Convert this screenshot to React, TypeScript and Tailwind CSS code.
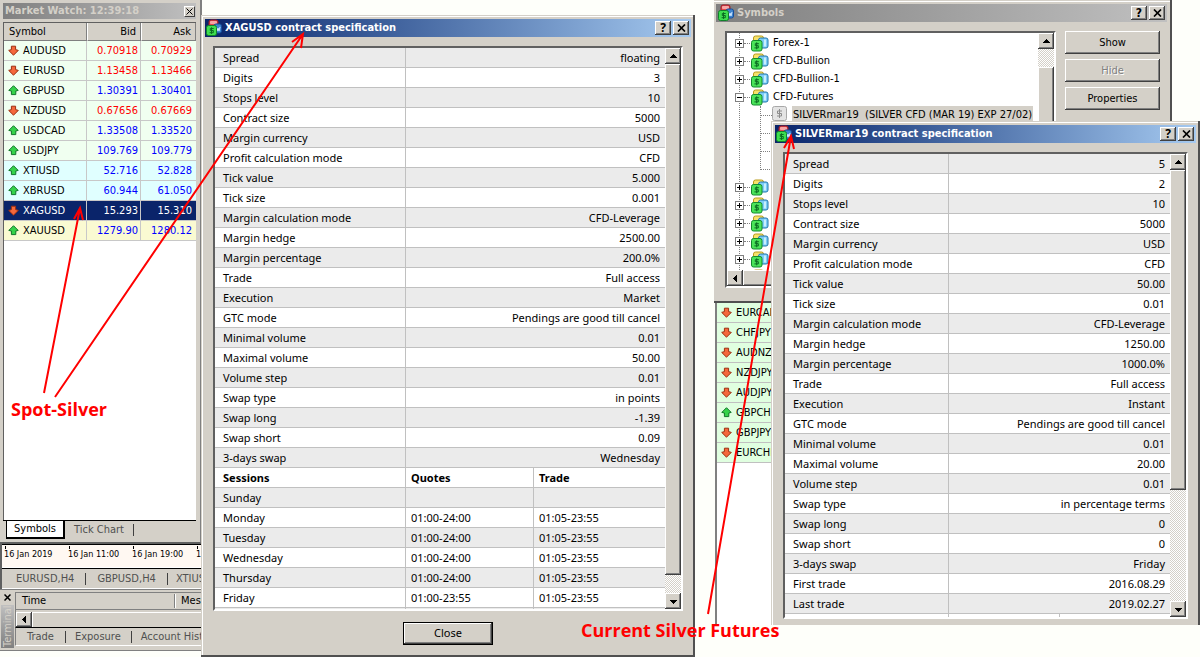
import { ReactNode } from "react";

type Row = [string, string];

type Quote = {
  symbol: string;
  bid: string;
  ask: string;
  up: boolean;
  color: string;
};

const quotes: Quote[] = [
  { symbol: "AUDUSD", bid: "0.70918", ask: "0.70929", up: false, color: "bg-[#f0fff0] text-[#ff0000]" },
  { symbol: "EURUSD", bid: "1.13458", ask: "1.13466", up: false, color: "bg-[#f0fff0] text-[#ff0000]" },
  { symbol: "GBPUSD", bid: "1.30391", ask: "1.30401", up: true, color: "bg-[#f0fff0] text-[#0000ff]" },
  { symbol: "NZDUSD", bid: "0.67656", ask: "0.67669", up: false, color: "bg-[#f0fff0] text-[#ff0000]" },
  { symbol: "USDCAD", bid: "1.33508", ask: "1.33520", up: true, color: "bg-[#f0fff0] text-[#0000ff]" },
  { symbol: "USDJPY", bid: "109.769", ask: "109.779", up: true, color: "bg-[#f0fff0] text-[#0000ff]" },
  { symbol: "XTIUSD", bid: "52.716", ask: "52.828", up: true, color: "bg-[#e0ffff] text-[#0000ff]" },
  { symbol: "XBRUSD", bid: "60.944", ask: "61.050", up: true, color: "bg-[#e0ffff] text-[#0000ff]" },
  { symbol: "XAGUSD", bid: "15.293", ask: "15.310", up: false, color: "bg-[#0a246a] text-white" },
  { symbol: "XAUUSD", bid: "1279.90", ask: "1280.12", up: true, color: "bg-[#fafad2] text-[#0000ff]" },
];

const crosses = [
  { symbol: "EURCAD", up: false },
  { symbol: "CHFJPY", up: false },
  { symbol: "AUDNZD", up: false },
  { symbol: "NZDJPY", up: false },
  { symbol: "AUDJPY", up: false },
  { symbol: "GBPCHF", up: true },
  { symbol: "GBPJPY", up: false },
  { symbol: "EURCHF", up: false },
];

const spotRows: Row[] = [
  ["Spread", "floating"],
  ["Digits", "3"],
  ["Stops level", "10"],
  ["Contract size", "5000"],
  ["Margin currency", "USD"],
  ["Profit calculation mode", "CFD"],
  ["Tick value", "5.000"],
  ["Tick size", "0.001"],
  ["Margin calculation mode", "CFD-Leverage"],
  ["Margin hedge", "2500.00"],
  ["Margin percentage", "200.0%"],
  ["Trade", "Full access"],
  ["Execution", "Market"],
  ["GTC mode", "Pendings are good till cancel"],
  ["Minimal volume", "0.01"],
  ["Maximal volume", "50.00"],
  ["Volume step", "0.01"],
  ["Swap type", "in points"],
  ["Swap long", "-1.39"],
  ["Swap short", "0.09"],
  ["3-days swap", "Wednesday"],
];

const sessions = [
  ["Sunday", "", ""],
  ["Monday", "01:00-24:00", "01:05-23:55"],
  ["Tuesday", "01:00-24:00", "01:05-23:55"],
  ["Wednesday", "01:00-24:00", "01:05-23:55"],
  ["Thursday", "01:00-24:00", "01:05-23:55"],
  ["Friday", "01:00-23:55", "01:05-23:55"],
  ["", "", ""],
];

const futuresRows: Row[] = [
  ["Spread", "5"],
  ["Digits", "2"],
  ["Stops level", "10"],
  ["Contract size", "5000"],
  ["Margin currency", "USD"],
  ["Profit calculation mode", "CFD"],
  ["Tick value", "50.00"],
  ["Tick size", "0.01"],
  ["Margin calculation mode", "CFD-Leverage"],
  ["Margin hedge", "1250.00"],
  ["Margin percentage", "1000.0%"],
  ["Trade", "Full access"],
  ["Execution", "Instant"],
  ["GTC mode", "Pendings are good till cancel"],
  ["Minimal volume", "0.01"],
  ["Maximal volume", "20.00"],
  ["Volume step", "0.01"],
  ["Swap type", "in percentage terms"],
  ["Swap long", "0"],
  ["Swap short", "0"],
  ["3-days swap", "Friday"],
  ["First trade", "2016.08.29"],
  ["Last trade", "2019.02.27"],
];

const raised =
  "bg-[#d4d0c8] shadow-[inset_-1px_-1px_#404040,inset_1px_1px_#fff,inset_-2px_-2px_#808080]";
const sunken =
  "border-2 border-t-[#606060] border-l-[#606060] border-r-white border-b-white bg-white";
const hatch =
  "bg-[repeating-conic-gradient(#fff_0_25%,#d4d0c8_0_50%)] bg-size-[2px_2px]";

function Arrow({ up }: { up: boolean }) {
  return (
    <svg width="11" height="11" viewBox="0 0 11 11" className="shrink-0">
      {up ? (
        <path d="M5.5 .7 10.2 5.4 7.8 6v3.6H3.4V6L.8 5.4Z" fill="#35d24a" stroke="#11752a" />
      ) : (
        <path d="M3.4 1.2h4.2v3.4l2.7.8-4.8 4.8L.7 5.4l2.7-.8Z" fill="#f4683c" stroke="#9c2f10" />
      )}
    </svg>
  );
}

function Triangle({ dir }: { dir: "up" | "down" | "left" }) {
  return (
    <svg width="7" height="7" viewBox="0 0 7 7" shapeRendering="crispEdges">
      {dir === "up" && <path d="M3 1h1v1h1v1h1v1h1v1H0V4h1V3h1V2h1Z" />}
      {dir === "down" && <path d="M3 6h1V5h1V4h1V3h1V2H0v1h1v1h1v1h1Z" />}
      {dir === "left" && <path d="M1 3v1h1v1h1v1h1v1h1V0H4v1H3v1H2v1Z" />}
    </svg>
  );
}

function WindowIcon() {
  return (
    <svg width="16" height="18" viewBox="0 0 16 18" className="shrink-0">
      <rect x="3" y="1" width="9" height="9" rx="2" fill="#e0474c" stroke="#9e1c28" />
      <rect x="4" y="2" width="7" height="3" rx="1" fill="#f7a5a5" />
      <rect x="8" y="5" width="7.5" height="9" rx="2" fill="#3f86cf" stroke="#174d9a" />
      <path d="M10 8l1 4 1-3 1 3 1-4" fill="none" stroke="#cfe6ff" />
      <rect x=".5" y="6.5" width="10" height="10" rx="2" fill="#3ede4f" stroke="#11822a" />
      <path d="M7.7 9.5H4.3v2h3v2.2H3.6M5.5 8.3v6.6" fill="none" stroke="#0a6b22" />
    </svg>
  );
}

function GroupIcon() {
  return (
    <svg width="18" height="17" viewBox="0 0 18 17" className="shrink-0">
      <rect x="2.5" y="1" width="10" height="9" rx="2" fill="#f6e26a" stroke="#b89a1c" />
      <rect x="7.5" y="3" width="9.5" height="10" rx="2" fill="#7ccdf8" stroke="#2377ad" />
      <path d="M14 4.5v7" stroke="#c8eeff" strokeWidth="2" />
      <rect x=".5" y="5.5" width="10.5" height="10.5" rx="2" fill="#4be45a" stroke="#138a2c" />
      <path d="M7.9 8.7H4.3v2h3v2.2H3.4M5.7 7.3v7" fill="none" stroke="#0a6b22" />
    </svg>
  );
}

function DisabledIcon() {
  return (
    <svg width="16" height="16" viewBox="0 0 16 16" className="shrink-0">
      <rect x=".5" y=".5" width="14" height="14" rx="2" fill="#e4e4e4" stroke="#a8a8a8" />
      <path d="M10 5H5.5v2.5h4V10H5M7.5 3v9" fill="none" stroke="#8c8c8c" />
    </svg>
  );
}

function CloseGlyph() {
  return (
    <svg width="9" height="8" viewBox="0 0 9 8">
      <path d="M1 .5 8 7.5M8 .5 1 7.5" stroke="#000" strokeWidth="1.7" />
    </svg>
  );
}

function TitleBar({ title, active }: { title: string; active: boolean }) {
  return (
    <div
      className={
        active
          ? "flex h-[18px] shrink-0 items-center gap-[3px] bg-linear-to-r from-[#0a246a] to-[#a6caf0] pr-[2px] pl-px text-white"
          : "flex h-[18px] shrink-0 items-center gap-[3px] bg-linear-to-r from-[#808080] to-[#c0c0c0] pr-[2px] pl-[2px] text-[#d4d0c8]"
      }
    >
      <WindowIcon />
      <h2 className="flex-1 truncate font-['DejaVu_Sans_Condensed','DejaVu_Sans',sans-serif] font-bold">{title}</h2>
      <div className="flex gap-[2px]">
        <button aria-label="Help" className={`flex h-[14px] w-4 items-center justify-center text-xs leading-none font-bold text-black ${raised}`}>
          ?
        </button>
        <button aria-label="Close window" className={`flex h-[14px] w-4 items-center justify-center ${raised}`}>
          <CloseGlyph />
        </button>
      </div>
    </div>
  );
}

function ScrollBar({ thumb }: { thumb: string }) {
  return (
    <div className={`flex w-4 shrink-0 flex-col ${hatch}`}>
      <button aria-label="Scroll up" className={`flex h-4 shrink-0 items-center justify-center ${raised}`}>
        <Triangle dir="up" />
      </button>
      <div className={`${thumb} ${raised}`} />
      <div className="flex-1" />
      <button aria-label="Scroll down" className={`flex h-4 shrink-0 items-center justify-center ${raised}`}>
        <Triangle dir="down" />
      </button>
    </div>
  );
}

function SpecTable({ rows, cols, children }: { rows: Row[]; cols: ReactNode; children?: ReactNode }) {
  return (
    <div className="min-w-0 flex-1 overflow-hidden">
      <table className="w-full table-fixed border-separate border-spacing-0">
        {cols}
        <tbody>
          {rows.map(([name, value]) => (
            <tr key={name} className="h-5 odd:bg-[#ebebeb]">
              <th className="border-r border-b border-[#c0c0c0] pl-2 text-left font-normal">{name}</th>
              <td colSpan={2} className="border-b border-[#c0c0c0] pr-[5px] text-right">{value}</td>
            </tr>
          ))}
          {children}
        </tbody>
      </table>
    </div>
  );
}

function MarketWatch() {
  return (
    <section className="flex h-[544px] flex-col border-r-2 border-b-2 border-r-[#808080] border-b-[#606060] pt-[3px] pr-1 pl-[3px]">
      <div className="flex h-4 items-center justify-between bg-linear-to-r from-[#808080] to-[#c0c0c0] pr-px pl-[2px]">
        <h2 className="font-bold text-[#d4d0c8]">Market Watch: 12:39:18</h2>
        <button aria-label="Close Market Watch" className="flex h-[11px] w-[11px] items-center justify-center border border-t-white border-l-white border-r-[#404040] border-b-[#404040] bg-[#d4d0c8]">
          <svg width="7" height="7" viewBox="0 0 7 7"><path d="M.5.5l6 6M6.5.5l-6 6" stroke="#000" /></svg>
        </button>
      </div>
      <div className="mt-[3px] flex-1 border-t border-l border-[#606060] bg-white">
        <table className="w-full table-fixed border-separate border-spacing-0">
          <colgroup>
            <col className="w-[83px]" />
            <col className="w-[54px]" />
            <col />
          </colgroup>
          <thead>
            <tr className="h-[18px] bg-[#d4d0c8]">
              <th className="border-r border-b border-[#808080] pl-[5px] text-left font-normal">Symbol</th>
              <th className="border-r border-b border-l border-[#808080] border-l-white pr-1 text-right font-normal">Bid</th>
              <th className="border-r border-b border-l border-[#808080] border-l-white pr-1 text-right font-normal">Ask</th>
            </tr>
          </thead>
          <tbody>
            {quotes.map((q) => (
              <tr key={q.symbol} className={`h-5 ${q.color}`}>
                <td className="border-r border-b border-[#c8c8c8] pl-1">
                  <div className={q.symbol === "XAGUSD" ? "flex items-center gap-1 text-white" : "flex items-center gap-1 text-black"}>
                    <Arrow up={q.up} />
                    {q.symbol}
                  </div>
                </td>
                <td className="border-r border-b border-[#c8c8c8] pr-[2px] text-right">{q.bid}</td>
                <td className="border-b border-[#c8c8c8] pr-1 text-right">{q.ask}</td>
              </tr>
            ))}
          </tbody>
        </table>
      </div>
      <div className="flex h-[22px] items-start border-t border-black pl-[3px]">
        <button className="h-[18px] border-r-2 border-b-2 border-l border-black bg-white px-[7px]">Symbols</button>
        <button className="h-[18px] px-[9px] text-[#505050]">Tick Chart</button>
        <span className="mt-[3px] h-3 border-l border-[#404040]" />
      </div>
    </section>
  );
}

function ChartAxis() {
  return (
    <section className="border-l-2 border-[#606060]">
      <div className="flex h-6 overflow-hidden border-t border-b border-t-black border-b-white bg-[#fff8f2] pt-px pl-[2px] text-[9px] leading-[11px] whitespace-nowrap">
        {["16 Jan 2019", "16 Jan 11:00", "16 Jan 19:00", "17 Jan 03:00"].map((label) => (
          <span key={label} className="w-16 shrink-0">
            <i className="ml-px block h-[3px] border-l border-black" />
            {label}
          </span>
        ))}
      </div>
      <nav className="flex h-[21px] items-center overflow-hidden border-t border-b border-t-black border-b-white whitespace-nowrap text-[#505050]">
        <a href="#eurusd" className="border-r border-[#404040] pr-[11px] pl-[14px] leading-3">EURUSD,H4</a>
        <a href="#gbpusd" className="border-r border-[#404040] px-[11px] leading-3">GBPUSD,H4</a>
        <a href="#xtiusd" className="pl-2 leading-3">XTIUSD,H4</a>
      </nav>
    </section>
  );
}

function Terminal() {
  return (
    <section className="flex h-[62px] border-t border-b border-[#808080]">
      <div className="flex w-[15px] shrink-0 flex-col items-center pt-1">
        <svg width="7" height="7" viewBox="0 0 7 7"><path d="M.5.5l6 6M6.5.5l-6 6" stroke="#000" strokeWidth="1.5" /></svg>
        <div className="mt-1 mb-[2px] flex w-[13px] flex-1 items-start overflow-hidden bg-linear-to-t from-[#808080] to-[#c0c0c0]">
          <span className="h-[42px] rotate-180 overflow-hidden leading-[13px] text-[#d4d0c8] [writing-mode:vertical-rl]">Terminal</span>
        </div>
      </div>
      <div className="min-w-0 flex-1 pt-[2px]">
        <div className="flex h-[18px] items-center overflow-hidden border-t border-b border-l border-[#808080]">
          <span className="w-[159px] shrink-0 border-r border-[#808080] pl-[6px]">Time</span>
          <span className="border-l border-white pl-[5px]">Message</span>
        </div>
        <div className="flex h-[18px] items-center border-b border-l border-b-black border-l-[#808080] pt-[2px]">
          <button aria-label="Scroll left" className={`flex h-[15px] w-4 items-center justify-center ${raised}`}>
            <Triangle dir="left" />
          </button>
          <div className="h-[15px] flex-1 border-t border-l border-white" />
        </div>
        <nav className="flex h-[18px] items-center overflow-hidden border-b border-l border-b-white border-l-[#808080] whitespace-nowrap text-[#505050]">
          <a href="#trade" className="border-r border-[#404040] px-[11px] leading-3">Trade</a>
          <a href="#exposure" className="border-r border-[#404040] pr-[10px] pl-[9px] leading-3">Exposure</a>
          <a href="#history" className="pl-[9px] leading-3">Account History</a>
        </nav>
      </div>
    </section>
  );
}

function SpotDialog() {
  return (
    <section className="absolute top-[15px] left-[201px] flex h-[642px] w-[494px] flex-col border-r-2 border-b-2 border-[#505050] bg-[#d4d0c8] pt-[4px] pr-[2px] pl-[4px] shadow-[inset_1px_1px_#d4d0c8,inset_2px_2px_#fff]">
      <TitleBar title="XAGUSD contract specification" active />
      <div className={`mx-2 mt-[9px] flex min-h-0 flex-1 ${sunken}`}>
        <SpecTable
          rows={spotRows}
          cols={
            <colgroup>
              <col className="w-[191px]" />
              <col className="w-[128px]" />
              <col />
            </colgroup>
          }
        >
          <tr className="h-5">
            <th className="border-r border-b border-[#c0c0c0] pl-2 text-left">Sessions</th>
            <th className="border-r border-b border-[#c0c0c0] pl-[5px] text-left">Quotes</th>
            <th className="border-b border-[#c0c0c0] pl-[5px] text-left">Trade</th>
          </tr>
          {sessions.map(([day, quote, trade]) => (
            <tr key={day} className="h-5 odd:bg-[#ebebeb] even:bg-white">
              <th className="border-r border-b border-[#c0c0c0] pl-2 text-left font-normal">{day}</th>
              <td className="border-r border-b border-[#c0c0c0] pl-[5px]">{quote}</td>
              <td className="border-b border-[#c0c0c0] pl-[5px]">{trade}</td>
            </tr>
          ))}
        </SpecTable>
        <ScrollBar thumb="h-[511px]" />
      </div>
      <div className="flex h-[44px] shrink-0 items-center justify-center">
        <button className={`h-[23px] w-[90px] border border-black ${raised}`}>Close</button>
      </div>
    </section>
  );
}

function TreeGroup({ label, open }: { label?: string; open?: boolean }) {
  return (
    <li className="flex h-[18px] items-center">
      <button
        aria-label={open ? "Collapse" : "Expand"}
        className="relative flex h-[9px] w-[9px] items-center justify-center border border-[#808080] bg-white"
      >
        <svg width="5" height="5" viewBox="0 0 5 5" shapeRendering="crispEdges">
          <path d={open ? "M0 2h5v1H0Z" : "M0 2h5v1H0ZM2 0h1v5H2Z"} />
        </svg>
      </button>
      <span className="mr-px w-[6px] border-t border-dotted border-[#808080]" />
      <GroupIcon />
      <span className="pl-1">{label}</span>
    </li>
  );
}

function SymbolsDialog() {
  return (
    <section className="absolute top-0 left-[714px] flex h-[303px] w-[458px] flex-col border-r-2 border-b-2 border-[#505050] bg-[#d4d0c8] pt-[4px] pr-[3px] pl-[2px] shadow-[inset_0_1px_#d4d0c8,inset_0_2px_#fff]">
      <TitleBar title="Symbols" active={false} />
      <div className="mt-[9px] flex gap-[9px] pr-[7px] pl-[9px]">
        <div className={`flex h-[257px] min-w-0 flex-1 ${sunken}`}>
          <div className="flex min-w-0 flex-1 flex-col">
            <ul className="relative flex-1 overflow-hidden pt-px pl-2">
              <li aria-hidden="true" className="absolute top-0 bottom-0 left-3 border-l border-dotted border-[#808080]" />
              <TreeGroup label="Forex-1" />
              <TreeGroup label="CFD-Bullion" />
              <TreeGroup label="CFD-Bullion-1" />
              <TreeGroup label="CFD-Futures" open />
              <li className="flex h-[72px] items-start pl-[25px]">
                <span aria-hidden="true" className="flex h-16 w-3 flex-col border-l border-dotted border-[#808080]">
                  <i className="h-[10px] border-b border-dotted border-[#808080]" />
                  <i className="h-[18px] border-b border-dotted border-[#808080]" />
                  <i className="h-[18px] border-b border-dotted border-[#808080]" />
                  <i className="h-[18px] border-b border-dotted border-[#808080]" />
                </span>
                <DisabledIcon />
                <span className="ml-1 bg-[#d4d0c8] px-px leading-[18px] whitespace-pre">
                  {"SILVERmar19  (SILVER CFD (MAR 19) EXP 27/02)"}
                </span>
              </li>
              <TreeGroup />
              <TreeGroup />
              <TreeGroup />
              <TreeGroup />
              <TreeGroup />
              <TreeGroup />
            </ul>
            <div className={`flex h-4 shrink-0 ${hatch}`}>
              <button aria-label="Scroll left" className={`flex w-4 items-center justify-center ${raised}`}>
                <Triangle dir="left" />
              </button>
              <div className={`w-52 ${raised}`} />
            </div>
          </div>
          <div className={`flex w-4 flex-col ${hatch}`}>
            <button aria-label="Scroll up" className={`flex h-4 shrink-0 items-center justify-center ${raised}`}>
              <Triangle dir="up" />
            </button>
            <div className={`mt-[18px] h-32 ${raised}`} />
          </div>
        </div>
        <div className="flex w-[95px] flex-col gap-[5px]">
          <button className={`h-[23px] ${raised}`}>Show</button>
          <button disabled className={`h-[23px] text-[#808080] text-shadow-[1px_1px_#fff] ${raised}`}>Hide</button>
          <button className={`h-[23px] ${raised}`}>Properties</button>
        </div>
      </div>
    </section>
  );
}

function CrossQuotes() {
  return (
    <section className="absolute top-[303px] left-[715px] h-[322px] w-[120px] border-l-2 border-[#808080] bg-white">
      <ul>
        {crosses.map((c) => (
          <li key={c.symbol} className="flex h-5 items-center gap-1 border-b border-[#c0c0c0] bg-[#e0ffe0] pl-1">
            <Arrow up={c.up} />
            {c.symbol}
          </li>
        ))}
      </ul>
    </section>
  );
}

function FuturesDialog() {
  return (
    <section className="absolute top-[121px] left-[771px] flex h-[504px] w-[429px] flex-col border-r-2 border-[#505050] bg-[#d4d0c8] pt-[4px] pr-[2px] pl-[4px] shadow-[inset_1px_1px_#d4d0c8,inset_2px_2px_#fff]">
      <TitleBar title="SILVERmar19 contract specification" active />
      <div className={`mx-2 mt-[9px] mb-[6px] flex min-h-0 flex-1 ${sunken}`}>
        <SpecTable
          rows={futuresRows}
          cols={
            <colgroup>
              <col className="w-[164px]" />
              <col className="w-[111px]" />
              <col />
            </colgroup>
          }
        >
          <tr className="h-5">
            <th className="border-r border-[#c0c0c0]" />
            <th className="border-r border-[#c0c0c0]" />
            <th />
          </tr>
        </SpecTable>
        <ScrollBar thumb="h-80" />
      </div>
    </section>
  );
}

function Annotations() {
  return (
    <div className="pointer-events-none absolute inset-0 font-['Comic_Sans_MS','Open_Sans',sans-serif] text-[18px] leading-6 font-bold text-[#ff0000]">
      <svg className="absolute inset-0 h-full w-full" fill="none" stroke="#ff0000" strokeWidth="2">
        <path d="M44 393 80 208M74 219l6-11 3 12" />
        <path d="M55 397 303 34M292 42l11-8-2 14" />
        <path d="M708 614 791 136M784 148l7-12 3 13" />
      </svg>
      <p className="absolute top-[397px] left-[11px]">Spot-Silver</p>
      <p className="absolute top-[618px] left-[581px]">Current Silver Futures</p>
    </div>
  );
}

export default function App() {
  return (
    <main className="relative min-h-screen w-full overflow-hidden bg-[#fefffa] font-['DejaVu_Sans_Condensed','DejaVu_Sans',sans-serif] text-[11px] leading-[14px] text-black">
      <div className="w-[202px] bg-[#d4d0c8]">
        <MarketWatch />
        <ChartAxis />
        <Terminal />
      </div>

      <SymbolsDialog />
      <CrossQuotes />
      <div className="font-['Noto_Sans',sans-serif]">
        <SpotDialog />
        <FuturesDialog />
      </div>

      <Annotations />
    </main>
  );
}
